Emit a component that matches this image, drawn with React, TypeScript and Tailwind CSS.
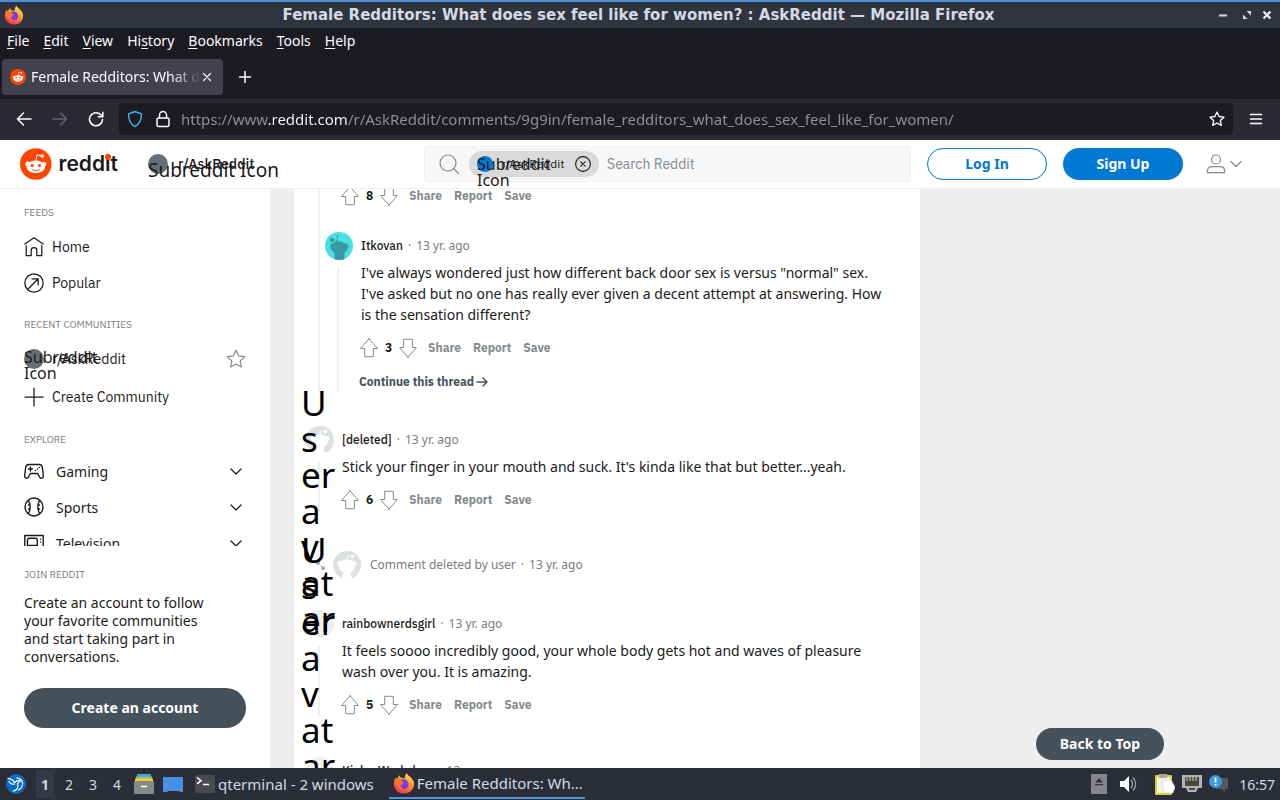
import type { ReactNode } from "react";

const labelFont = "font-['IBM_Plex_Sans','Noto_Sans',sans-serif]";

function FirefoxLogo({ className }: { className: string }) {
  return (
    <svg viewBox="0 0 24 24" className={className} aria-hidden="true">
      <defs>
        <linearGradient id="ff-body" x1="0.8" y1="0.1" x2="0.3" y2="1">
          <stop offset="0" stopColor="#ffe14a" />
          <stop offset="0.45" stopColor="#ff8a2a" />
          <stop offset="1" stopColor="#f4315b" />
        </linearGradient>
      </defs>
      <path
        d="M15 1c.6 2 2.300 2.800 3.800 4.200C21.500 7.600 23 10 23 13.200 23 19.200 18 23.500 12 23.500S1 19 1 13c0-3 .8-5.200 2.300-7.300.2 1 .5 1.500 1 2C5 6.300 6 4.500 7.700 3.500c-.1 1.300.3 2.400 1.300 3 1.400-.3 2.800.1 3.800.6C12.600 4.600 13.500 2.500 15 1Z"
        fill="url(#ff-body)"
      />
      <path d="M9 8.500c3-1.600 7.600.3 7.900 4.500.2 3.200-2.100 5.500-5 5.500-2.700 0-5.100-2-5-5 1 .9 2.500.9 4-.4-1.700-.3-2.700-2-1.900-4.600Z" fill="#7a3ee0" />
      <path d="M4 8.500c1.500-1.200 3.600-1.300 5-.5-.3 1.600.6 3 2.500 3.200-.6 1.500-2.200 1.800-3.500 2.300-.2 2 1 4 3.500 4.300-3.700 1.400-7-1.200-7.500-4.800Z" fill="#ff7a1f" />
    </svg>
  );
}

function RedditLogo({ className }: { className: string }) {
  return (
    <svg viewBox="0 0 20 20" className={className} aria-hidden="true">
      <circle cx="10" cy="10" r="10" fill="#ff4500" />
      <path
        d="M16.670 10a1.460 1.460 0 0 0-2.470-1 7.120 7.120 0 0 0-3.850-1.230l.65-3.120 2.140.45a1 1 0 1 0 .13-.61L10.820 4a.31.31 0 0 0-.37.24l-.74 3.470a7.140 7.140 0 0 0-3.900 1.230 1.460 1.460 0 1 0-1.610 2.390 2.870 2.870 0 0 0 0 .44c0 2.240 2.610 4.060 5.830 4.060s5.830-1.820 5.830-4.060a2.870 2.870 0 0 0 0-.44 1.460 1.460 0 0 0 .81-1.330Z"
        fill="#fff"
      />
      <circle cx="7.670" cy="11" r="1" fill="#ff4500" />
      <circle cx="12.330" cy="11" r="1" fill="#ff4500" />
      <path d="M7.600 13.400a3.840 3.840 0 0 0 4.800 0" fill="none" stroke="#ff4500" strokeWidth="0.55" strokeLinecap="round" />
    </svg>
  );
}

function Line({
  children,
  className,
  box = "0 0 20 20",
  width = 1.25,
}: {
  children: ReactNode;
  className: string;
  box?: string;
  width?: number;
}) {
  return (
    <svg
      viewBox={box}
      className={className}
      fill="none"
      stroke="currentColor"
      strokeWidth={width}
      strokeLinejoin="round"
      strokeLinecap="round"
      aria-hidden="true"
    >
      {children}
    </svg>
  );
}

const STAR = "M10 1.300l2.600 5.600 6.100.8-4.500 4.200 1.200 6.100L10 15l-5.400 3 1.200-6.100L1.300 7.700l6.100-.8L10 1.300Z";

function Arrow({ down = false }: { down?: boolean }) {
  return (
    <Line className={down ? "size-5 shrink-0 rotate-180" : "size-5 shrink-0"} width={1}>
      <path d="M10 .8 18.500 10.500h-4.200v8.200H5.700v-8.200H1.500L10 .8Z" />
    </Line>
  );
}

function Actions({ score, height = "h-6" }: { score: number; height?: string }) {
  return (
    <div className={`-ml-0.5 flex items-center text-[12px] font-bold text-[#878a8c] ${labelFont} ${height}`}>
      <button type="button" aria-label="Upvote"><Arrow /></button>
      <span className="w-[19px] text-center text-[#1a1a1b]">{score}</span>
      <button type="button" aria-label="Downvote"><Arrow down /></button>
      <div className="ml-2.5 flex gap-3">
        <button type="button">Share</button>
        <button type="button">Report</button>
        <button type="button">Save</button>
      </div>
    </div>
  );
}

function Snoo() {
  return (
    <svg viewBox="0 0 28 28" className="size-7 shrink-0" aria-hidden="true">
      <circle cx="14" cy="14" r="14" fill="#dbe0e1" />
      <path
        d="M4.500 13c-.6-2 1.500-3.800 3.400-2.600C11.500 7.900 16.500 8 20 10.400c2-1 4 .8 3.300 2.800-.2.700-.7 1.200-1.300 1.500 0 3.300-1.800 5.600-4.500 6.800 1 2 1.300 4 1.300 6.500H9.200c0-2.500.3-4.500 1.300-6.500C7.800 20.300 6 18 6 14.700c-.7-.3-1.300-.9-1.500-1.700Z"
        fill="#fff"
      />
      <path d="m14 8.500 1-4 3.500.8" fill="none" stroke="#fff" strokeWidth="1" />
      <circle cx="19.500" cy="5.500" r="1.800" fill="#fff" />
    </svg>
  );
}

function PaleAvatar() {
  return <span className="size-7 shrink-0 rounded-full bg-[#edeff1]" />;
}

function TealAvatar() {
  return (
    <svg viewBox="0 0 28 28" className="size-7 shrink-0" aria-hidden="true">
      <circle cx="14" cy="14" r="14" fill="#48dfe5" />
      <path
        d="M5.300 12.500c2-.6 3.700-1.400 5.200-3 1.200-.6 2.300-.3 3.500.3 1.500-.6 2.500-.4 4 .6 1.500.6 3.200 1.300 5 1.800.5 3 .2 5.500-2.300 7.200L19.500 21v6c-3 1.200-7 1.200-10 0v-6l-1.800-1.800C5.500 17.500 5 15.500 5.300 12.500Z"
        fill="#379aa4"
      />
      <circle cx="7" cy="8" r="2.200" fill="#379aa4" />
      <path d="M9 7.500 12.500 9V4.500" fill="none" stroke="#379aa4" strokeWidth="0.800" />
      <circle cx="12.500" cy="4" r="1" fill="#379aa4" />
    </svg>
  );
}

function Comment({
  avatar,
  name,
  children,
}: {
  avatar: ReactNode;
  name: string;
  children?: ReactNode;
}) {
  return (
    <article className="flex gap-2">
      <div className="flex w-7 shrink-0 flex-col">
        {avatar}
        <span className="ml-3 mt-2 w-0.5 flex-1 bg-[#edeff1]" />
      </div>
      <div className="min-w-0 flex-1">
        <header className="flex h-7 items-center gap-[5px] text-[12px] text-[#7c7c7c]">
          <a href="#user" className={`font-medium text-[#1c1c1c] ${labelFont}`}>{name}</a>
          <span>·</span>
          <span>13 yr. ago</span>
        </header>
        {children}
      </div>
    </article>
  );
}

function Body({ children }: { children: ReactNode }) {
  return <p className="mb-[11px] mt-0.5 pr-8 text-[14px] leading-[21px] text-[#1a1a1b]">{children}</p>;
}

function AvatarAlt({ className }: { className: string }) {
  return (
    <div className={`pointer-events-none absolute left-[7px] text-[35px] leading-[36px] text-black ${className}`}>
      {["U", "s", "er", "a", "v", "at", "ar"].map((part) => (
        <div key={part}>{part}</div>
      ))}
    </div>
  );
}

function SideLabel({ children, className }: { children: ReactNode; className: string }) {
  return <h2 className={`h-4 text-[10px] leading-4 text-[#7c7c7c] ${labelFont} ${className}`}>{children}</h2>;
}

function Topic({ icon, name }: { icon: ReactNode; name: string }) {
  return (
    <button type="button" className="flex h-9 w-full items-center gap-3 text-left text-[14px]">
      {icon}
      <span className="flex-1">{name}</span>
      <Line className="size-5" width={1.25}><path d="m5 8 5 5 5-5" /></Line>
    </button>
  );
}

function Menu({ before = "", letter, after }: { before?: string; letter: string; after: string }) {
  return (
    <button type="button">
      {before}
      <span className="underline underline-offset-2">{letter}</span>
      {after}
    </button>
  );
}

function BrowserChrome() {
  return (
    <>
      <div className="flex h-7 shrink-0 items-center border-t-2 border-[#4a90d9] bg-[#2f343f] px-1 text-[#d3dae3]">
        <FirefoxLogo className="size-5" />
        <h1 className="flex-1 truncate pl-9 text-center font-['DejaVu_Sans',sans-serif] text-[15px] font-bold leading-6">
          Female Redditors: What does sex feel like for women? : AskReddit — Mozilla Firefox
        </h1>
        <div className="flex items-center gap-2 pr-[3px]">
          <button type="button" aria-label="Minimize">
            <svg viewBox="0 0 12 12" className="size-3"><path d="M2 6.500h8" stroke="#d3dae3" strokeWidth="2" /></svg>
          </button>
          <button type="button" aria-label="Restore" className="ml-1">
            <svg viewBox="0 0 12 12" className="size-3" fill="#d3dae3"><path d="M5.500 2H10v4.500ZM2 5.500V10h4.500Z" /></svg>
          </button>
          <button type="button" aria-label="Close window">
            <svg viewBox="0 0 12 12" className="size-3"><path d="m2.500 2.500 7 7m0-7-7 7" stroke="#e8edf3" strokeWidth="2.300" /></svg>
          </button>
        </div>
      </div>

      <nav className="flex h-[26px] shrink-0 items-center gap-3.5 bg-[#1c1b22] px-[7px] text-[14px] leading-5 text-[#fbfbfe]">
        <Menu letter="F" after="ile" />
        <Menu letter="E" after="dit" />
        <Menu letter="V" after="iew" />
        <Menu before="Hi" letter="s" after="tory" />
        <Menu letter="B" after="ookmarks" />
        <Menu letter="T" after="ools" />
        <Menu letter="H" after="elp" />
      </nav>

      <div className="flex h-[45px] shrink-0 items-center bg-[#1c1b22] px-0.5 text-[#fbfbfe]">
        <div className="flex h-9 w-[221px] items-center rounded bg-[#42414d] pl-2">
          <RedditLogo className="size-4 shrink-0" />
          <div className="ml-[5px] w-[168px] overflow-hidden whitespace-nowrap text-[14px] [mask-image:linear-gradient(to_right,black_140px,transparent_170px)]">
            Female Redditors: What does sex feel
          </div>
          <button type="button" aria-label="Close tab">
            <Line className="size-4" box="0 0 16 16" width={1.2}><path d="m4.500 4.500 7 7m0-7-7 7" /></Line>
          </button>
        </div>
        <button type="button" aria-label="New tab" className="ml-3">
          <Line className="size-5" width={1.5}><path d="M10 4.500v11M4.500 10h11" /></Line>
        </button>
      </div>

      <div className="flex h-[41px] shrink-0 items-center bg-[#2b2a33] px-3 pb-0.5 text-[#fbfbfe]">
        <button type="button" aria-label="Back" className="mx-0.5">
          <Line className="size-5" width={1.5}><path d="M17 10H3.500m6-6-6 6 6 6" /></Line>
        </button>
        <button type="button" aria-label="Forward" className="ml-3.5 text-[#65646f]">
          <Line className="size-5" width={1.5}><path d="M3 10h13.500m-6-6 6 6-6 6" /></Line>
        </button>
        <button type="button" aria-label="Reload" className="ml-4">
          <Line className="size-5" width={1.6}><path d="M16.500 10.500a6.500 6.500 0 1 1-2-5l2 2M16.800 3.200v4.500h-4.500" /></Line>
        </button>
        <div className="ml-[13px] flex h-8 min-w-0 flex-1 items-center rounded bg-[#1c1b22] px-1.5">
          <Line className="size-5 shrink-0 text-[#35b6e8]" width={1.4}>
            <path d="M10 2.500 16.500 5c0 5-1.500 10-6.500 12.500C5 15 3.500 10 3.500 5L10 2.500Z" />
          </Line>
          <Line className="ml-2 size-5 shrink-0" width={1.5}>
            <rect x="4" y="9" width="12" height="8.500" rx="1.500" />
            <path d="M6.500 9V6a3.500 3.500 0 0 1 7 0v3" />
          </Line>
          <input
            type="text"
            aria-label="Address"
            defaultValue="https://www.reddit.com/r/AskReddit/comments/9g9in/female_redditors_what_does_sex_feel_like_for_women/"
            className="ml-2 h-6 min-w-0 flex-1 bg-[linear-gradient(to_right,#92919a_88px,#fbfbfe_88px,#fbfbfe_166px,#92919a_166px)] bg-clip-text text-[15px] text-transparent outline-none"
          />
          <button type="button" aria-label="Bookmark this page" className="mr-0.5">
            <Line className="size-4" width={1.7}><path d={STAR} /></Line>
          </button>
        </div>
        <button type="button" aria-label="Application menu" className="ml-[13px] mr-0.5">
          <Line className="size-5 text-white" width={1.5}><path d="M4.500 5.500h11M4.500 10h11M4.500 14.500h11" /></Line>
        </button>
      </div>
    </>
  );
}

function SiteHeader() {
  return (
    <header className="flex h-[49px] shrink-0 items-center border-b border-[#edeff1] bg-white px-5 text-[#1a1a1b]">
      <a href="#home" className="flex w-[98px] shrink-0 items-center gap-[7px]">
        <RedditLogo className="size-8" />
        <span className="relative font-['Inter',sans-serif] text-[21px] font-semibold leading-8">
          redd
          <span className="relative">
            i
            <span className="absolute left-0 top-[3px] size-1.5 rounded-full bg-[#ff4500]" />
          </span>
          t
        </span>
      </a>
      <div className="relative ml-[30px] w-[276px]">
        <div className="flex items-center gap-2.5">
          <span className="size-5 rounded-full bg-[#646d73]" />
          <span className={`text-[14px] font-medium ${labelFont}`}>r/AskReddit</span>
        </div>
        <span className="absolute left-0 top-1 whitespace-nowrap text-[19px] leading-6">Subreddit Icon</span>
      </div>
      <label className="flex h-9 min-w-0 flex-1 items-center rounded border border-[#edeff1] bg-[#f6f7f8] pl-3.5">
        <Line className="size-5 shrink-0 text-[#878a8c]" width={1.2}>
          <circle cx="9" cy="9" r="8" />
          <path d="m15 15 4.500 4.500" />
        </Line>
        <span className="relative ml-2.5 flex h-[26px] w-[130px] shrink-0 items-center rounded-full bg-[#dadada] pl-2">
          <span className="size-4 rounded-full bg-[#0079d3]" />
          <span className={`ml-2 flex-1 text-[12px] ${labelFont}`}>r/AskReddit</span>
          <Line className="mr-2 size-4" box="0 0 16 16" width={1.1}>
            <circle cx="8" cy="8" r="7.400" />
            <path d="m5.800 5.800 4.400 4.400m0-4.400-4.400 4.400" />
          </Line>
          <span className="absolute left-2 top-[5px] w-20 text-[16px] leading-4">Subreddit Icon</span>
        </span>
        <input
          type="text"
          aria-label="Search Reddit"
          placeholder="Search Reddit"
          className={`ml-2 min-w-0 flex-1 bg-transparent text-[14px] outline-none placeholder:text-[#878a8c] ${labelFont}`}
        />
      </label>
      <button type="button" className="ml-4 h-8 w-[120px] rounded-full border border-[#0079d3] pb-0.5 text-[14px] font-bold text-[#0079d3]">
        Log In
      </button>
      <button type="button" className="ml-4 h-8 w-[120px] rounded-full bg-[#0079d3] pb-0.5 text-[14px] font-bold text-white">
        Sign Up
      </button>
      <button type="button" aria-label="User menu" className="ml-[23px] mr-[15px] flex items-center text-[#878a8c]">
        <Line className="size-5" width={1.2}>
          <circle cx="10" cy="5.500" r="4.500" />
          <path d="M1.300 18.700v-1.400c0-3 2-4.700 4.700-4.700h8c2.700 0 4.700 1.700 4.700 4.700v1.400H1.300Z" />
        </Line>
        <Line className="ml-[3px] size-4" box="0 0 16 16"><path d="m2 5.500 5 5 5-5" /></Line>
      </button>
    </header>
  );
}

function Sidebar() {
  return (
    <aside className="flex w-[270px] shrink-0 flex-col bg-white pl-6 pr-6 text-[#1a1a1b]">
      <div className="min-h-0 flex-1 overflow-hidden pt-4">
        <SideLabel className="mb-2">FEEDS</SideLabel>
        <a href="#home" className={`flex h-9 items-center gap-2 text-[14px] ${labelFont}`}>
          <Line className="size-5">
            <path d="M.8 7 10 .8 19.200 7M2.200 8.500v10h5v-5a2.800 2.800 0 0 1 5.600 0v5h5v-10" />
          </Line>
          Home
        </a>
        <a href="#popular" className={`flex h-9 items-center gap-2 text-[14px] ${labelFont}`}>
          <Line className="size-5">
            <circle cx="10" cy="10" r="9.200" />
            <path d="M3.800 16.200 14 6M8 5.800h6.200V12" />
          </Line>
          Popular
        </a>
        <SideLabel className="mb-2 mt-4">RECENT COMMUNITIES</SideLabel>
        <div className={`relative flex h-9 items-center gap-2 text-[14px] ${labelFont}`}>
          <span className="size-5 rounded-full bg-[#646d73]" />
          <a href="#askreddit" className="flex-1">r/AskReddit</a>
          <button type="button" aria-label="Favorite" className="text-[#878a8c]">
            <Line className="size-5" width={1.2}><path d={STAR} /></Line>
          </button>
          <span className="absolute left-0 top-2 w-20 font-['Noto_Sans',sans-serif] text-[16px] leading-4">
            Subreddit Icon
          </span>
        </div>
        <button type="button" className={`flex h-10 items-center gap-2 text-[14px] ${labelFont}`}>
          <Line className="size-5"><path d="M10 1v18M1 10h18" /></Line>
          Create Community
        </button>
        <SideLabel className="mb-[5px] mt-[15px]">EXPLORE</SideLabel>
        <Topic
          name="Gaming"
          icon={
            <Line className="size-5" width={1.4}>
              <path d="M5 3.500h10c2 0 3 .8 3.300 2.500l1 8.500c.3 3-2.800 3.500-3.800 1.500l-1.200-2.500c-.3-.6-.8-1-1.500-1H7.200c-.7 0-1.200.4-1.500 1L4.500 16C3.500 18 .4 17.500.7 14.500l1-8.500C2 4.300 3 3.500 5 3.500ZM6.500 6v4M4.500 8h4M11.500 9.500h.1M13.500 8h.1M15.200 6.500h.1" />
            </Line>
          }
        />
        <Topic
          name="Sports"
          icon={
            <Line className="size-5" width={1.4}>
              <circle cx="10" cy="10" r="9" />
              <path d="M4.500 3.500c2 4 2 9 0 13M15.500 3.500c-2 4-2 9 0 13M4.500 8h1.500M4.500 12H6M14 8h1.500M14 12h1.500" />
            </Line>
          }
        />
        <Topic
          name="Television"
          icon={
            <Line className="size-5" width={1.4}>
              <path d="M.8 2.500h18.400v13H.8v-13ZM3.500 12.500V7c0-1 .5-1.800 1.800-1.800h6.200c1.300 0 1.800.8 1.800 1.800v5.500h-9.800ZM16.500 6h.1M16.500 9h.1M5 18h10" />
            </Line>
          }
        />
      </div>
      <div className="pb-10 pt-[21px]">
        <SideLabel className="mb-[11px]">JOIN REDDIT</SideLabel>
        <p className="pr-8 text-[14px] leading-[18px]">
          Create an account to follow your favorite communities and start taking part in conversations.
        </p>
        <button type="button" className="mt-[22px] h-10 w-full rounded-full bg-[#45515b] pb-0.5 text-[14px] font-bold text-white">
          Create an account
        </button>
      </div>
    </aside>
  );
}

function Thread() {
  return (
    <main className="relative ml-6 w-[626px] overflow-hidden bg-white pl-3">
      <div className="flex gap-2">
        <div className="w-7 shrink-0">
          <span className="ml-3 block h-full w-0.5 bg-[#edeff1]" />
        </div>
        <div className="min-w-0 flex-1">
          <Actions score={8} height="h-[14px]" />
          <div className="-ml-[17px] mt-[29px]">
            <Comment avatar={<TealAvatar />} name="Itkovan">
              <Body>
                I've always wondered just how different back door sex is versus "normal" sex. I've asked but no one
                has really ever given a decent attempt at answering. How is the sensation different?
              </Body>
              <Actions score={3} />
              <a
                href="#thread"
                className={`-ml-0.5 mt-3 flex h-5 items-center gap-0.5 text-[12px] font-bold text-[#45515b] ${labelFont}`}
              >
                Continue this thread
                <Line className="size-3" box="0 0 12 12" width={1.5}><path d="M1 6h10M7 2l4 4-4 4" /></Line>
              </a>
            </Comment>
          </div>
        </div>
      </div>
      <div className="mt-[34px]">
        <Comment avatar={<Snoo />} name="[deleted]">
          <Body>Stick your finger in your mouth and suck. It's kinda like that but better...yeah.</Body>
          <Actions score={6} />
        </Comment>
      </div>
      <div className="mt-[39px] flex h-7 items-center text-[12px] text-[#7c7c7c]">
        <Line className="ml-2 mr-[5px] size-3.5" box="0 0 14 14" width={1}>
          <path d="m2 3 3 3M2.500 6h2.500v-2.500M7 8l3 3M7.500 11h2.500v-2.500" />
        </Line>
        <Snoo />
        <span className="ml-[9px] flex gap-[5px]">
          <span>Comment deleted by user</span>
          <span>·</span>
          <span>13 yr. ago</span>
        </span>
      </div>
      <div className="mt-[31px]">
        <Comment avatar={<PaleAvatar />} name="rainbownerdsgirl">
          <Body>
            It feels soooo incredibly good, your whole body gets hot and waves of pleasure wash over you. It is
            amazing.
          </Body>
          <Actions score={5} />
        </Comment>
      </div>
      <div className="mt-10">
        <Comment avatar={<PaleAvatar />} name="Kinky_Workshop" />
      </div>
      <AvatarAlt className="top-[196px]" />
      <AvatarAlt className="top-[343px]" />
    </main>
  );
}

function Taskbar() {
  return (
    <footer className="flex h-8 shrink-0 items-center bg-[#2b2e39] text-[14px] text-[#d3dae3]">
      <button type="button" aria-label="Applications" className="ml-1.5">
        <svg viewBox="0 0 20 20" className="size-5">
          <circle cx="10" cy="10" r="10" fill="#0b6bc4" />
          <path
            d="M2 4.500c3 .2 5 1.500 6.500 4C10 7 12 6 15.500 6.500c-2.500.8-3.500 1.800-4 3.500 1.500 3-.5 6.500-4 7M3 7.500c1.500 3 3.500 3 5.500 2.500M11 4c4.500.5 7 4.500 5 8.500-.8 1.500-2 2.500-3.500 3.500"
            fill="none" stroke="#e8f4ff" strokeWidth="1.300" strokeLinecap="round"
          />
        </svg>
      </button>
      <div className="ml-2.5 flex items-center">
        <button type="button" className="h-7 w-[18px] bg-[#343845] font-bold">1</button>
        <button type="button" className="ml-[3px] w-6">2</button>
        <button type="button" className="w-6">3</button>
        <button type="button" className="w-6">4</button>
      </div>
      <button type="button" aria-label="Files" className="ml-[5px]">
        <svg viewBox="0 0 20 20" className="size-5">
          <path d="M3 0h14v4H3Z" fill="#4a9fd8" />
          <path d="M2 2.500h16V6H2Z" fill="#8fc36b" />
          <path d="M1 4.500h18V8H1Z" fill="#f3c94b" />
          <rect y="7" width="20" height="13" rx="1" fill="#878a87" />
          <path d="M7 12.500h6" stroke="#fff" strokeWidth="1.500" />
        </svg>
      </button>
      <button type="button" aria-label="Show desktop" className="ml-[9px]">
        <svg viewBox="0 0 20 20" className="size-5">
          <path d="M0 3h20v15h-3l-1-1H5l-1 1H0Z" fill="#4a90e2" />
        </svg>
      </button>
      <button type="button" className="ml-3 flex items-center gap-[3px] text-[15px]">
        <svg viewBox="0 0 20 20" className="size-5">
          <rect y="1" width="20" height="18" rx="1.500" fill="#4a4b4d" />
          <path d="m2 3.500 4 3.200-4 3.200M8 10.500h6" fill="none" stroke="#fff" strokeWidth="1.500" />
        </svg>
        qterminal - 2 windows
      </button>
      <button type="button" className="ml-[15px] flex h-[30px] w-[196px] items-center gap-0.5 border-b-2 border-[#5294d6] pl-1 text-left text-[15px]">
        <FirefoxLogo className="size-[22px] shrink-0" />
        Female Redditors: Wh…
      </button>
      <div className="ml-auto flex items-center pr-[5px]">
        <svg viewBox="0 0 16 20" className="h-5 w-4" aria-hidden="true">
          <path d="M0 0h16v20H0Z" fill="#858687" />
          <path d="m8 4 4 4.500H4L8 4Zm-4 6h8v1.200H4Z" fill="#33363c" />
        </svg>
        <svg viewBox="0 0 18 18" className="ml-3 size-[18px]" aria-hidden="true">
          <path d="M1 6h4l5-5v16l-5-5H1Z" fill="#fff" />
          <path d="M12 5c2 2 2 6 0 8M14 2.500c3.500 3.500 3.500 9.500 0 13" fill="none" stroke="#9da1a8" strokeWidth="1.300" />
        </svg>
        <svg viewBox="0 0 20 22" className="ml-[18px] h-[22px] w-5" aria-hidden="true">
          <rect x="0" y="2" width="17" height="20" rx="1" fill="#d6d529" />
          <path d="M2 4h13v16H2Z" fill="#f4f4ec" />
          <path d="M4 1h8v4H4Z" fill="#aaa99a" />
          <path d="M7 7h9l4 7-2 6H9L7 7Z" fill="#fff" stroke="#d1d1cc" strokeWidth=".6" />
        </svg>
        <svg viewBox="0 0 20 20" className="ml-[7px] size-5" aria-hidden="true">
          <path d="M0 1h20v13h-4l-2 4H6l-2-4H0Z" fill="#b2b4b6" />
          <path d="M3 3h14v9H3Z" fill="#454741" />
          <path d="M5 3v4M8 3v4M11 3v4M14 3v4" stroke="#e1dca2" strokeWidth="1" />
          <path d="M7 15h6" stroke="#45484c" strokeWidth="2" />
        </svg>
        <svg viewBox="0 0 20 20" className="ml-[7px] size-5" aria-hidden="true">
          <path d="M7 4h12v11h-3v3l-3-3H7Z" fill="#55585b" />
          <circle cx="6.500" cy="7.500" r="6.500" fill="#3b9be0" />
          <path d="M6.500 3.500v5M6.500 10v1.500" stroke="#fff" strokeWidth="1.800" />
        </svg>
        <time className="ml-2.5">16:57</time>
      </div>
    </footer>
  );
}

export default function App() {
  return (
    <div className="flex h-screen flex-col overflow-hidden bg-[#1c1b22] font-['Noto_Sans',sans-serif]">
      <BrowserChrome />
      <SiteHeader />
      <div className="relative flex min-h-0 flex-1 bg-[#eeeeee]">
        <Sidebar />
        <Thread />
        <button
          type="button"
          className="absolute bottom-2 right-[116px] h-8 w-32 rounded-full bg-[#45515b] pb-0.5 text-[14px] font-bold text-white"
        >
          Back to Top
        </button>
      </div>
      <Taskbar />
    </div>
  );
}
